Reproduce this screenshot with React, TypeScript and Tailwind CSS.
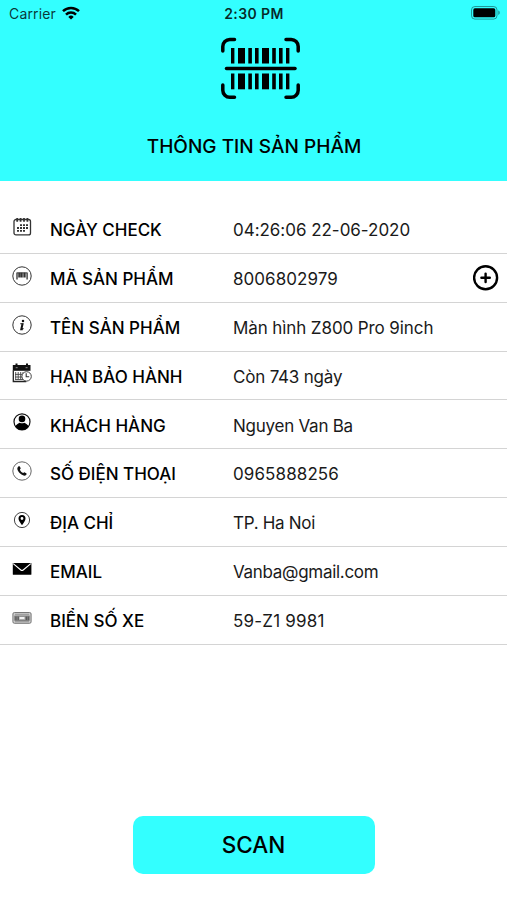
import React from 'react';

interface InfoRow {
  label: string;
  value: string;
  valueClass: string;
  icon: React.ReactNode;
  canAdd?: boolean;
}

const iconClasses = 'w-5 h-5 shrink-0 text-black';

// --- ICONS ---

function WifiIcon() {
  return (
    <svg viewBox="0 0 18 14" className="w-[18px] h-[14px]" fill="none" stroke="black" strokeWidth="2.5">
      <path d="M1 5.2a11.4 11.4 0 0 1 16 0" />
      <path d="M4 8.6a7.1 7.1 0 0 1 10 0" />
      <path d="M9 13.6 6.3 10.9a3.9 3.9 0 0 1 5.4 0z" fill="black" stroke="none" />
    </svg>
  );
}

function BatteryIcon() {
  return (
    <svg viewBox="0 0 30 14" className="w-[30px] h-[14px]">
      <rect x="0.5" y="0.5" width="25.5" height="12.6" rx="3.4" fill="none" stroke="black" strokeOpacity="0.4" />
      <rect x="2.3" y="2.3" width="22" height="9" rx="1.6" fill="black" />
      <path d="M27.3 4.6c1.9.6 1.9 3.8 0 4.4z" fill="black" fillOpacity="0.45" />
    </svg>
  );
}

const bars = [
  { x: 11, w: 3.4 },
  { x: 18, w: 7 },
  { x: 28.3, w: 3.6 },
  { x: 35, w: 3.6 },
  { x: 42, w: 7 },
  { x: 52.2, w: 3.6 },
  { x: 59, w: 3.6 },
  { x: 66, w: 3.4 },
];

function BarcodeScanIcon() {
  return (
    <svg viewBox="0 0 80 64" className="w-20 h-16">
      <g fill="none" stroke="black" strokeWidth="3.5" strokeLinecap="round">
        <path d="M2.8 14V9.5a7 7 0 0 1 7-7h4.7" />
        <path d="M66 2.5h5.2a7 7 0 0 1 7 7V14" />
        <path d="M2.8 48v5.2a7 7 0 0 0 7 7h4.7" />
        <path d="M66 60.2h5.2a7 7 0 0 0 7-7V48" />
        <path d="M6.5 31.5h68.5" />
      </g>
      {bars.map((bar) => (
        <g key={bar.x}>
          <rect x={bar.x} y="11" width={bar.w} height="15.5" />
          <rect x={bar.x} y="36.5" width={bar.w} height="15.8" />
        </g>
      ))}
    </svg>
  );
}

function CalendarIcon() {
  return (
    <svg viewBox="0 0 20 20" className={iconClasses} fill="none" stroke="#333">
      <rect x="2" y="2.5" width="16.5" height="15.4" rx="2" strokeWidth="1.3" />
      <path d="M5.2 1v3.8M8.6 1v3.8M12 1v3.8M15.4 1v3.8" strokeWidth="1.8" />
      <path d="M8 8.2h8M5 11h11M5 13.8h8" strokeWidth="1.8" strokeDasharray="2 1" />
    </svg>
  );
}

function BarcodeIcon() {
  return (
    <svg viewBox="0 0 20 20" className={iconClasses} fill="none" stroke="#333">
      <circle cx="10" cy="10" r="9.2" />
      <path d="M5 6.5v7M15.1 6.5v7" strokeWidth="1.3" />
      <path d="M7.1 6.5v5M9.8 6.5v5M12.8 6.5v5" strokeWidth="1.7" />
      <path d="M8.5 6.5v5M11.3 6.5v5M5 6.9h10" strokeWidth="0.8" />
    </svg>
  );
}

function InfoIcon() {
  return (
    <svg viewBox="0 0 20 20" className={iconClasses}>
      <circle cx="10" cy="10" r="9.2" fill="none" stroke="#333" />
      <circle cx="11" cy="6" r="1.25" fill="#111" />
      <path d="M8.3 8.7h2.8l-1.4 5.5 1.8-.7" fill="none" stroke="#111" strokeWidth="1.1" />
      <path d="M10.3 8.7 9 14.4h1.7" fill="none" stroke="#111" strokeWidth="1.5" />
    </svg>
  );
}

function WarrantyIcon() {
  return (
    <svg viewBox="0 0 20 20" className={iconClasses}>
      <path d="M.8 2h17.7v5.8H.8z" fill="#111" />
      <path d="M4.5.4v3M15 .4v3" stroke="#111" strokeWidth="2" />
      <path d="M3.7 4.7h2M13.6 4.7h2" stroke="#ddd" strokeWidth="0.6" />
      <path d="M1.3 7.5v11h13" fill="none" stroke="#222" strokeWidth="1.3" />
      <path d="M3.7 9v7.5M6.2 9v7.5M8.7 9v7.5M11 9v7.5M3 11.4h8M3 14h8M3 16.5h8" stroke="#444" strokeWidth="0.9" />
      <circle cx="14.6" cy="13.4" r="4.7" fill="white" stroke="#444" />
      <path d="M14.2 10.3v3.5h3" fill="none" stroke="#333" strokeWidth="1.1" />
    </svg>
  );
}

function CustomerIcon() {
  return (
    <svg viewBox="0 0 20 20" className={iconClasses}>
      <circle cx="10" cy="9.8" r="8" fill="none" stroke="#111" strokeWidth="1.2" />
      <circle cx="10" cy="6.9" r="3.3" />
      <path d="M3.2 14.3c1.5-2.1 3.2-3.3 4.6-3.6a4.5 4.5 0 0 0 4.4 0c1.4.3 3.1 1.5 4.6 3.6a8 8 0 0 1-13.6 0z" />
    </svg>
  );
}

function PhoneIcon() {
  return (
    <svg viewBox="0 0 20 20" className={iconClasses}>
      <circle cx="10" cy="10" r="9.2" fill="none" stroke="#555" strokeWidth="0.9" />
      <path d="M6.3 5.6c.6-.6 1.2-.5 1.5 0l.8 1.4c.2.5 0 .9-.7 1.5.5 1.6 1.7 2.9 3.4 3.6.6-.7 1.1-.9 1.5-.6l1.4.8c.6.4.5 1-.1 1.6-1.1 1.1-2.6 1-4.6-.3-1.8-1.2-3.2-2.8-3.9-4.5-.5-1.4-.2-2.7.7-3.5z" fill="#111" />
    </svg>
  );
}

function LocationIcon() {
  return (
    <svg viewBox="0 0 20 20" className={iconClasses}>
      <circle cx="10" cy="10" r="7.6" fill="none" stroke="#444" />
      <path
        fillRule="evenodd"
        d="M10 15.2C8 12.3 6.5 10.4 6.5 8.4a3.5 3.5 0 0 1 7 0c0 2-1.5 3.9-3.5 6.8zM10 7.1a1.4 1.4 0 1 0 0 2.8 1.4 1.4 0 0 0 0-2.8z"
      />
    </svg>
  );
}

function MailIcon() {
  return (
    <svg viewBox="0 0 20 20" className={iconClasses}>
      <rect x="0.8" y="4" width="18.6" height="11.8" rx="0.6" />
      <path d="M1.2 4.6 8.8 11c.8.7 1.6.7 2.4 0l7.6-6.4" fill="none" stroke="white" strokeWidth="1.1" />
    </svg>
  );
}

function PlateIcon() {
  return (
    <svg viewBox="0 0 20 20" className={iconClasses} fill="none">
      <rect x="0.9" y="4.5" width="18.2" height="10.8" rx="1.5" fill="#ccc" stroke="#777" />
      <rect x="2.8" y="8" width="14.4" height="4.4" fill="#aaa" stroke="#666" strokeWidth="0.7" />
      <path d="M3 6.3h14M3 13.7h14" stroke="#888" strokeWidth="0.8" />
      <path d="M4 8.5v3.4M6.1 8.5v3.4M14.2 8.5v3.4M16.1 8.5v3.4" stroke="#444" strokeWidth="1.2" />
      <path d="M7.6 10h4.8" stroke="#fff" strokeWidth="1.7" />
    </svg>
  );
}

function PlusIcon() {
  return (
    <svg viewBox="0 0 26 26" className="w-[26px] h-[26px]" fill="none" stroke="black" strokeWidth="2.4">
      <circle cx="12.6" cy="12.8" r="11.5" />
      <path d="M12.6 8.6v8.4M8.4 12.8h8.4" strokeLinecap="round" />
    </svg>
  );
}

const rows: InfoRow[] = [
  { label: 'NGÀY CHECK', value: '04:26:06 22-06-2020', valueClass: 'tracking-[-0.03px]', icon: <CalendarIcon /> },
  { label: 'MÃ SẢN PHẨM', value: '8006802979', valueClass: 'tracking-[0.05px]', icon: <BarcodeIcon />, canAdd: true },
  { label: 'TÊN SẢN PHẨM', value: 'Màn hình Z800 Pro 9inch', valueClass: 'tracking-[-0.1px]', icon: <InfoIcon /> },
  { label: 'HẠN BẢO HÀNH', value: 'Còn 743 ngày', valueClass: 'tracking-[-0.2px]', icon: <WarrantyIcon /> },
  { label: 'KHÁCH HÀNG', value: 'Nguyen Van Ba', valueClass: 'tracking-[-0.25px]', icon: <CustomerIcon /> },
  { label: 'SỐ ĐIỆN THOẠI', value: '0965888256', valueClass: 'tracking-[0.1px]', icon: <PhoneIcon /> },
  { label: 'ĐỊA CHỈ', value: 'TP. Ha Noi', valueClass: 'tracking-[-0.3px]', icon: <LocationIcon /> },
  { label: 'EMAIL', value: 'Vanba@gmail.com', valueClass: 'tracking-[-0.3px]', icon: <MailIcon /> },
  { label: 'BIỂN SỐ XE', value: '59-Z1 9981', valueClass: 'tracking-[0.2px]', icon: <PlateIcon /> },
];

export default function App() {
  return (
    <div className="w-full h-[900px] flex flex-col bg-white text-black overflow-hidden font-['Inter',sans-serif]">
      {/* HEADER */}
      <header className="h-[181px] shrink-0 bg-[#33ffff] flex flex-col items-center">
        <div className="w-full h-[26px] grid grid-cols-3 items-center pl-[9px] pr-[6px]">
          <div className="flex items-center gap-[6px]">
            <span className="text-[14px] tracking-[0.15px] text-black/80">Carrier</span>
            <WifiIcon />
          </div>
          <span className="text-[14px] tracking-[0.4px] pr-[2px] font-semibold text-center text-black/85">2:30 PM</span>
          <div className="flex justify-end">
            <BatteryIcon />
          </div>
        </div>
        <div className="mt-[11px] pl-[13px]">
          <BarcodeScanIcon />
        </div>
        <h1 className="mt-8 pl-px text-[19px] leading-7 tracking-[0.03px] font-medium">THÔNG TIN SẢN PHẨM</h1>
      </header>

      {/* PRODUCT INFO */}
      <ul className="mt-6 flex flex-col">
        {rows.map((row) => (
          <li key={row.label} className="h-[48.85px] border-b border-[#d4d4d4] flex items-center pl-3 pr-2">
            <div className="mb-1 w-[38px]">{row.icon}</div>
            <span className="w-[183px] text-[17px] font-medium pt-1">{row.label}</span>
            <span className={`flex-1 text-[17px] pt-1 text-[#1a1a1a] ${row.valueClass}`}>{row.value}</span>
            {row.canAdd && (
              <button type="button">
                <PlusIcon />
              </button>
            )}
          </li>
        ))}
      </ul>

      {/* SCAN */}
      <button
        type="button"
        className="mt-auto mb-[26px] mx-auto w-[242px] h-[58px] rounded-[10px] bg-[#33ffff] text-[22.5px] font-medium"
      >
        SCAN
      </button>
    </div>
  );
}
